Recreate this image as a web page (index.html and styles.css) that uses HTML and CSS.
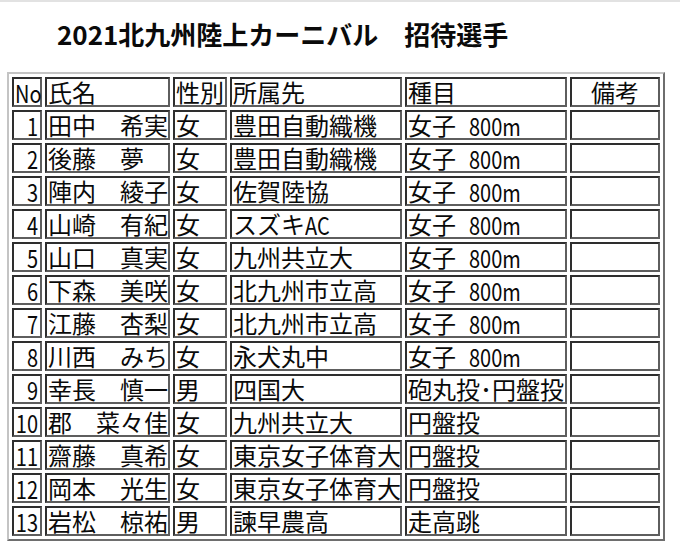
FILE: index.html
```html
<!DOCTYPE html>
<html lang="ja">
<head>
<meta charset="utf-8">
<title>2021北九州陸上カーニバル 招待選手</title>
<link rel="stylesheet" href="styles.css">
</head>
<body>
<h1 class="title">2021北九州陸上カーニバル　招待選手</h1>
<table class="roster">
  <colgroup>
    <col class="c-no">
    <col class="c-name">
    <col class="c-sex">
    <col class="c-team">
    <col class="c-event">
    <col class="c-note">
  </colgroup>
  <thead>
    <tr><th><span class="lat">No</span></th><th>氏名</th><th>性別</th><th>所属先</th><th>種目</th><th class="center">備考</th></tr>
  </thead>
  <tbody>
    <tr><td class="num"><span class="lat">1</span></td><td>田中　希実</td><td>女</td><td>豊田自動織機</td><td>女子<span class="lat dist">800m</span></td><td></td></tr>
    <tr><td class="num"><span class="lat">2</span></td><td>後藤　夢</td><td>女</td><td>豊田自動織機</td><td>女子<span class="lat dist">800m</span></td><td></td></tr>
    <tr><td class="num"><span class="lat">3</span></td><td>陣内　綾子</td><td>女</td><td>佐賀陸協</td><td>女子<span class="lat dist">800m</span></td><td></td></tr>
    <tr><td class="num"><span class="lat">4</span></td><td>山崎　有紀</td><td>女</td><td>スズキ<span class="lat">AC</span></td><td>女子<span class="lat dist">800m</span></td><td></td></tr>
    <tr><td class="num"><span class="lat">5</span></td><td>山口　真実</td><td>女</td><td>九州共立大</td><td>女子<span class="lat dist">800m</span></td><td></td></tr>
    <tr><td class="num"><span class="lat">6</span></td><td>下森　美咲</td><td>女</td><td>北九州市立高</td><td>女子<span class="lat dist">800m</span></td><td></td></tr>
    <tr><td class="num"><span class="lat">7</span></td><td>江藤　杏梨</td><td>女</td><td>北九州市立高</td><td>女子<span class="lat dist">800m</span></td><td></td></tr>
    <tr><td class="num"><span class="lat">8</span></td><td>川西　みち</td><td>女</td><td>永犬丸中</td><td>女子<span class="lat dist">800m</span></td><td></td></tr>
    <tr><td class="num"><span class="lat">9</span></td><td>幸長　慎一</td><td>男</td><td>四国大</td><td>砲丸投･円盤投</td><td></td></tr>
    <tr><td class="num"><span class="lat">10</span></td><td>郡　菜々佳</td><td>女</td><td>九州共立大</td><td>円盤投</td><td></td></tr>
    <tr><td class="num"><span class="lat">11</span></td><td>齋藤　真希</td><td>女</td><td>東京女子体育大</td><td>円盤投</td><td></td></tr>
    <tr><td class="num"><span class="lat">12</span></td><td>岡本　光生</td><td>女</td><td>東京女子体育大</td><td>円盤投</td><td></td></tr>
    <tr><td class="num"><span class="lat">13</span></td><td>岩松　椋祐</td><td>男</td><td>諫早農高</td><td>走高跳</td><td></td></tr>
  </tbody>
</table>
</body>
</html>
```

FILE: styles.css
```css
html, body {
  margin: 0;
  padding: 0;
  background: #ffffff;
}

body {
  border-top: 2px solid #e2e2e2;
  color: #0a0a0a;
  font-family: "Noto Sans CJK JP", sans-serif;
}

.title {
  margin: 0;
  padding: 19px 0 0 57px;
  font-family: "Noto Sans CJK JP", sans-serif;
  font-weight: 700;
  font-size: 26px;
  line-height: 26px;
  color: #0a0a0a;
  white-space: nowrap;
}

.roster {
  margin: 25px 0 0 7px;
  width: 658px;
  table-layout: fixed;
  border-collapse: separate;
  border-spacing: 3px;
  border: 2px solid;
  border-color: #c4c4c4 #6e6e6e #6e6e6e #c4c4c4;
}

.c-no { width: 30px; }
.c-name { width: 125px; }
.c-sex { width: 54px; }
.c-team { width: 172px; }
.c-event { width: 162px; }
.c-note { width: 90px; }

.roster th,
.roster td {
  box-sizing: border-box;
  height: 30px;
  padding: 0 1px;
  border: 2px solid;
  border-color: #2e2e2e #5e5e5e #5e5e5e #2e2e2e;
  font-size: 24px;
  font-weight: 400;
  line-height: 26px;
  text-align: left;
  vertical-align: middle;
  white-space: nowrap;
}

.roster .center {
  text-align: center;
}

.roster .num {
  text-align: right;
  padding-right: 2px;
}

/* narrow, tall latin glyphs like the original sheet's font */
.lat {
  display: inline-block;
  font-size: 20px;
  line-height: 20px;
  transform: scaleY(1.22);
  transform-origin: 50% 70%;
}

.dist {
  margin-left: 13px;
}
```
